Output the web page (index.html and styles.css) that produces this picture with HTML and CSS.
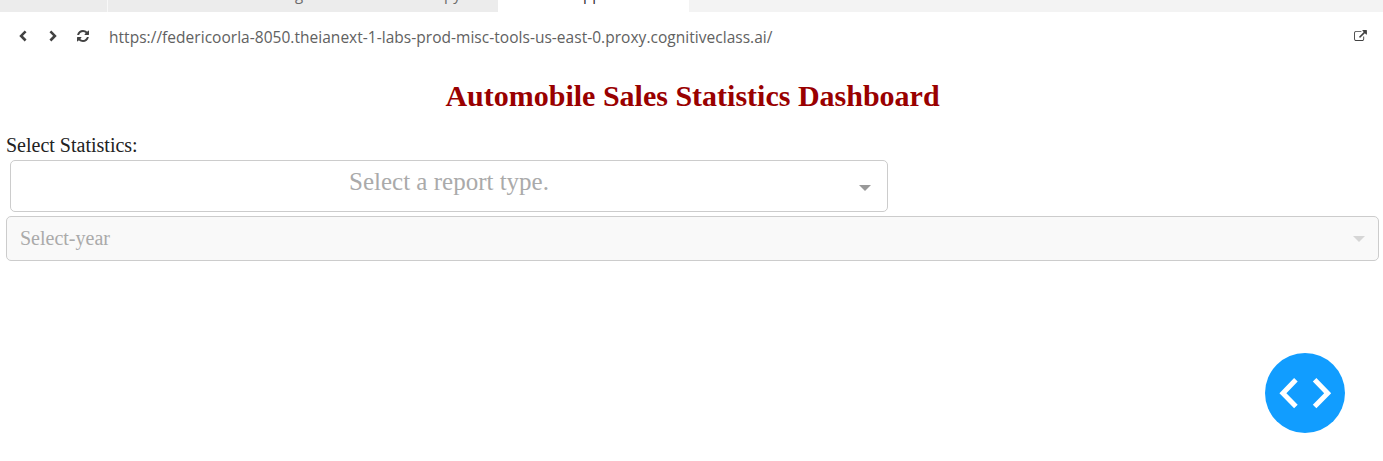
FILE: index.html
```
<!DOCTYPE html>
<html lang="en">
<head>
<meta charset="utf-8">
<title>Automobile Sales Statistics Dashboard</title>
<link rel="stylesheet" href="styles.css">
</head>
<body>
<div class="tabs">
  <div class="tab tab-first"></div>
  <div class="tab tab-file"><span class="tail-g">g</span><span class="tail-py">py</span></div>
  <div class="tab tab-active"><span class="tail-pp">pp</span></div>
</div>
<nav class="toolbar">
  <svg class="chev" viewBox="0 0 8 12"><path d="M6.6 1.3 2.1 5.9l4.5 4.6"/></svg>
  <svg class="chev chev-next" viewBox="0 0 8 12"><path d="M1.4 1.3 5.9 5.9l-4.5 4.6"/></svg>
  <svg class="refresh" viewBox="0 0 1536 1536"><path d="M1511 928q0 5-1 7-64 268-268 434.500t-478 166.500q-146 0-282.500-55t-243.500-157l-129 129q-19 19-45 19t-45-19-19-45v-448q0-26 19-45t45-19h448q26 0 45 19t19 45-19 45l-137 137q71 66 161 102t187 36q134 0 250-65t186-179q11-17 53-117 8-23 30-23h192q13 0 22.500 9.500t9.500 22.500zm25-800v448q0 26-19 45t-45 19h-448q-26 0-45-19t-19-45 19-45l138-138q-148-137-349-137-134 0-250 65t-186 179q-11 17-53 117-8 23-30 23h-199q-13 0-22.500-9.500t-9.500-22.500v-7q65-268 270-434.500t480-166.500q146 0 284 55.500t245 156.500l130-129q19-19 45-19t45 19 19 45z"/></svg>
  <span class="url">https://federicoorla-8050.theianext-1-labs-prod-misc-tools-us-east-0.proxy.cognitiveclass.ai/</span>
  <svg class="external" viewBox="0 0 1792 1536"><path d="M1408 928v320q0 119-84.500 203.500t-203.500 84.500h-832q-119 0-203.500-84.500t-84.500-203.500v-832q0-119 84.500-203.500t203.500-84.500h704q14 0 23 9t9 23v64q0 14-9 23t-23 9h-704q-66 0-113 47t-47 113v832q0 66 47 113t113 47h832q66 0 113-47t47-113v-320q0-14 9-23t23-9h64q14 0 23 9t9 23zm384-864v512q0 26-19 45t-45 19-45-19l-176-176-652 652q-10 10-23 10t-23-10l-114-114q-10-10-10-23t10-23l652-652-176-176q-19-19-19-45t19-45 45-19h512q26 0 45 19t19 45z"/></svg>
</nav>
<main class="page">
  <h1 class="title">Automobile Sales Statistics Dashboard</h1>
  <label class="label">Select Statistics:</label>
  <div class="select report"><span class="report-text">Select a report type.</span><i class="arrow"></i></div>
  <div class="select year"><span>Select-year</span><i class="arrow"></i></div>
</main>
<button class="debug" aria-label="Debug menu"><svg viewBox="0 0 80 80"><path d="M30.900 26.800 17.900 40.200l13 13.400M49.600 26.800 62.700 40.200l-13.100 13.400"/></svg></button>
</body>
</html>
```
FILE: styles.css
```
* { box-sizing: border-box; }
body {
  margin: 0;
  height: 461px;
  overflow: hidden;
  background: #fff;
  font-family: "Liberation Serif", serif;
}
.tabs {
  display: flex;
  height: 12px;
  overflow: hidden;
  background: #f3f3f3;
  font: 15px/20px "Open Sans", sans-serif;
  color: #6b6b6b;
}
.tab { height: 12px; background: #ececec; }
.tab span { display: block; margin-top: -16px; }
.tab-first { width: 108px; border-right: 1px solid #f8f8f8; }
.tab-file { display: flex; width: 390px; }
.tail-g { width: 149px; margin-left: 187px; }
.tab-active { width: 191px; padding-left: 85px; background: #fff; color: #333; }
.toolbar {
  display: flex;
  align-items: flex-start;
  height: 51px;
  padding: 0 16px 0 19px;
}
.toolbar svg { flex: none; fill: #424242; }
.toolbar .chev {
  width: 8px;
  height: 12px;
  margin-top: 18px;
  fill: none;
  stroke: #424242;
  stroke-width: 2.6;
}
.toolbar .chev-next { margin-left: 22px; }
.refresh { width: 12px; height: 12px; margin: 18px 20px 0 20px; }
.url {
  font: 15.5px/22px "Open Sans", sans-serif;
  letter-spacing: 0.03px;
  color: #616161;
  margin-top: 14px;
  white-space: nowrap;
}
.external { width: 13px; height: 11px; margin: 18px 0 0 auto; }
.page { padding: 0 4px 0 6px; }
.title {
  margin: 0;
  padding-top: 16px;
  height: 70px;
  font-size: 30px;
  line-height: 34px;
  text-align: center;
  color: #900;
}
.label { display: block; height: 27px; font-size: 20px; line-height: 24px; color: #222; }
.select {
  display: flex;
  align-items: center;
  justify-content: space-between;
  border: 1px solid #ccc;
  border-radius: 5px;
  color: #aaa;
}
.report {
  width: 878px;
  height: 52px;
  margin: 0 0 4px 4px;
  padding: 0 16px 0 28px;
  font-size: 25px;
}
.report-text { flex: 1; text-align: center; line-height: 44px; height: 52px; }
.report .arrow { margin-top: 4px; }
.year {
  height: 45px;
  padding: 0 13px 0 13px;
  background: #f9f9f9;
  font-size: 20px;
}
.arrow { border: 6px solid transparent; border-top-color: #999; border-bottom: 0; }
.year .arrow { border-top-color: #d6d6d6; }
.debug {
  position: absolute;
  left: 1265px;
  top: 353px;
  width: 80px;
  height: 80px;
  padding: 0;
  border: 0;
  border-radius: 50%;
  background: #119dff;
}
.debug svg { display: block; fill: none; stroke: #fff; stroke-width: 5; }
```
